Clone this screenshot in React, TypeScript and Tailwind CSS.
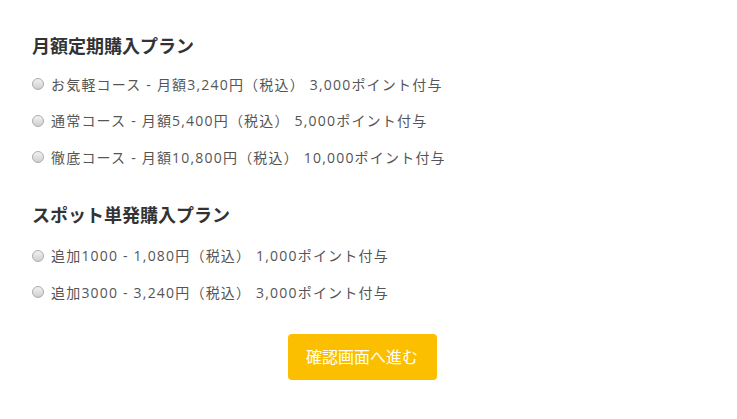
const monthly = [
  "お気軽コース - 月額3,240円（税込） 3,000ポイント付与",
  "通常コース - 月額5,400円（税込） 5,000ポイント付与",
  "徹底コース - 月額10,800円（税込） 10,000ポイント付与",
];

const spot = [
  "追加1000 - 1,080円（税込） 1,000ポイント付与",
  "追加3000 - 3,240円（税込） 3,000ポイント付与",
];

function Radio() {
  return (
    <span className="inline-block w-[12px] h-[12px] rounded-full border border-[#acacac] bg-gradient-to-b from-[#f2f2f2] to-[#cfcfcf] shrink-0" />
  );
}

function Option({ label }: { label: string }) {
  return (
    <label className="flex items-center h-[36.5px] gap-[7px] text-[14px] tracking-[1.2px] text-[#555] cursor-pointer">
      <Radio />
      <span className="whitespace-pre">{label}</span>
    </label>
  );
}

export default function App() {
  return (
    <div
      className="bg-white min-h-[419px] pl-[32px] pr-[45px] pt-[34px]"
      style={{ fontFamily: '"Open Sans", "Noto Sans CJK JP", sans-serif' }}
    >
      <h2 className="h-6 flex items-center text-[18px] font-bold text-[#333]">月額定期購入プラン</h2>
      <div className="mt-[8px]">
        {monthly.map((m) => (
          <Option key={m} label={m} />
        ))}
      </div>

      <h2 className="mt-[28px] h-6 flex items-center text-[18px] font-bold text-[#333]">スポット単発購入プラン</h2>
      <div className="mt-[10px]">
        {spot.map((s) => (
          <Option key={s} label={s} />
        ))}
      </div>

      <div className="flex justify-center mt-[23px]">
        <button className="w-[149px] h-[46px] rounded-[4px] bg-[#fbbf00] text-white text-[16px]">
          確認画面へ進む
        </button>
      </div>
    </div>
  );
}
